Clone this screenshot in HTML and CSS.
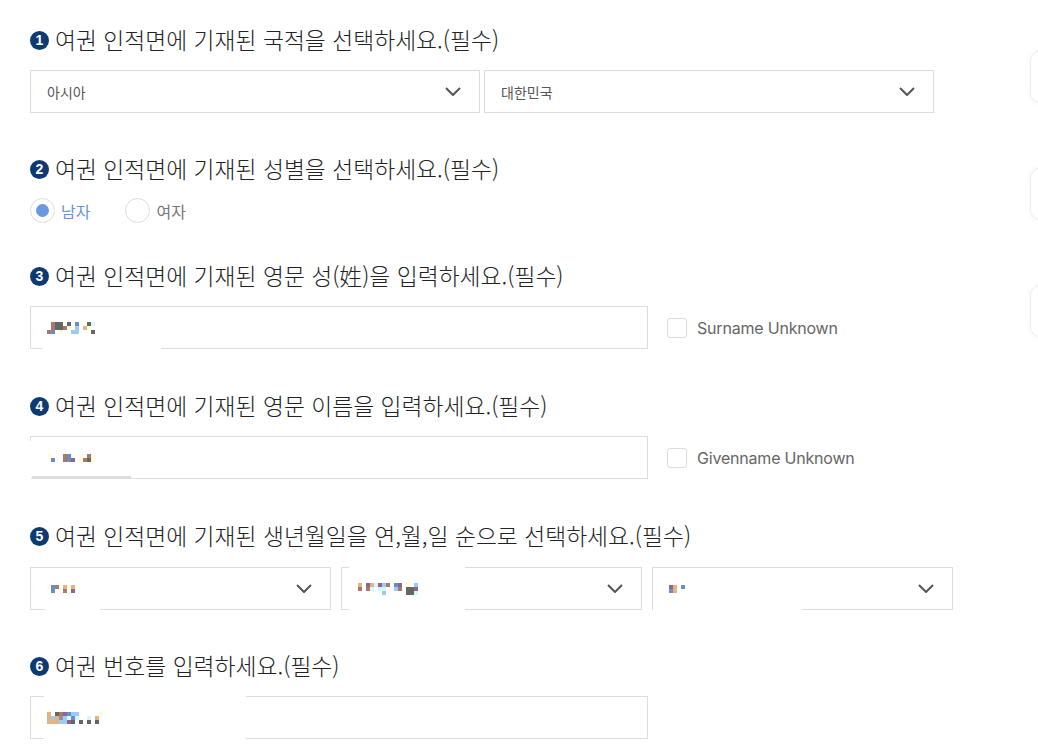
FILE: index.html
```html
<!DOCTYPE html>
<html lang="ko">
<head>
<meta charset="utf-8">
<title>여권 정보 입력</title>
<link rel="stylesheet" href="styles.css">
</head>
<body>
<div class="page">
  <form class="form">
    <section class="q q-first">
      <h2 class="q-title"><span class="num">1</span>여권 인적면에 기재된 국적을 선택하세요.(필수)</h2>
      <div class="row row-2">
        <div class="select"><span class="select-text">아시아</span><svg class="chev" viewBox="0 0 16 9"><path d="M1 1l7 7 7-7"/></svg></div>
        <div class="select"><span class="select-text">대한민국</span><svg class="chev" viewBox="0 0 16 9"><path d="M1 1l7 7 7-7"/></svg></div>
      </div>
    </section>

    <section class="q q-radio">
      <h2 class="q-title"><span class="num">2</span>여권 인적면에 기재된 성별을 선택하세요.(필수)</h2>
      <div class="radios">
        <label class="radio on"><span class="dot"></span>남자</label>
        <label class="radio"><span class="dot"></span>여자</label>
      </div>
    </section>

    <section class="q">
      <h2 class="q-title"><span class="num">3</span>여권 인적면에 기재된 영문 성(姓)을 입력하세요.(필수)</h2>
      <div class="row">
        <div class="input">
          <div class="mosaic">
            <div class="mr"><i class="e"></i><i class="b"></i><i class="g"></i><i class="g"></i><i class="e"></i><i class="g"></i><i class="e"></i><i class="u"></i><i class="e"></i><i class="e"></i><i class="g"></i><i class="c"></i></div>
            <div class="mr"><i class="e"></i><i class="b"></i><i class="g"></i><i class="g"></i><i class="b"></i><i class="e"></i><i class="y"></i><i class="l"></i><i class="e"></i><i class="t"></i><i class="y"></i><i class="e"></i></div>
            <div class="mr"><i class="b"></i><i class="u"></i><i class="e"></i><i class="y"></i><i class="e"></i><i class="e"></i><i class="l"></i><i class="l"></i><i class="e"></i><i class="e"></i><i class="e"></i><i class="g"></i></div>
          </div>
          <span class="gap gap-b" style="left:11px;width:119px"></span>
        </div>
        <label class="check"><span class="box"></span>Surname Unknown</label>
      </div>
    </section>

    <section class="q">
      <h2 class="q-title"><span class="num">4</span>여권 인적면에 기재된 영문 이름을 입력하세요.(필수)</h2>
      <div class="row">
        <div class="input">
          <div class="mosaic m2">
            <div class="mr"><i class="y"></i><i class="e"></i><i class="e"></i><i class="e"></i><i class="b"></i><i class="u"></i><i class="e"></i><i class="e"></i><i class="y"></i><i class="e"></i><i class="b"></i><i class="y"></i></div>
            <div class="mr"><i class="e"></i><i class="u"></i><i class="e"></i><i class="e"></i><i class="b"></i><i class="u"></i><i class="p"></i><i class="e"></i><i class="y"></i><i class="b"></i><i class="g"></i><i class="y"></i></div>
          </div>
          <span class="gap gap-l" style="top:4px;height:39px"></span>
          <span class="bar"></span>
        </div>
        <label class="check"><span class="box"></span>Givenname Unknown</label>
      </div>
    </section>

    <section class="q q-5">
      <h2 class="q-title"><span class="num">5</span>여권 인적면에 기재된 생년월일을 연,월,일 순으로 선택하세요.(필수)</h2>
      <div class="row row-3">
        <div class="select">
          <div class="mosaic m2">
            <div class="mr"><i class="y"></i><i class="u"></i><i class="b"></i><i class="e"></i><i class="t"></i><i class="y"></i><i class="t"></i></div>
            <div class="mr"><i class="e"></i><i class="u"></i><i class="e"></i><i class="e"></i><i class="b"></i><i class="e"></i><i class="p"></i></div>
          </div>
          <svg class="chev" viewBox="0 0 16 9"><path d="M1 1l7 7 7-7"/></svg>
          <span class="gap gap-b" style="left:14px;width:55px"></span>
        </div>
        <div class="select">
          <div class="mosaic m2">
            <div class="mr"><i class="t"></i><i class="e"></i><i class="p"></i><i class="t"></i><i class="c"></i><i class="p"></i><i class="l"></i><i class="b"></i><i class="e"></i><i class="u"></i><i class="p"></i><i class="e"></i><i class="y"></i><i class="e"></i><i class="l"></i></div>
            <div class="mr"><i class="b"></i><i class="e"></i><i class="b"></i><i class="c"></i><i class="e"></i><i class="c"></i><i class="c"></i><i class="e"></i><i class="e"></i><i class="l"></i><i class="b"></i><i class="e"></i><i class="g"></i><i class="g"></i><i class="p"></i></div>
            <div class="mr"><i class="e"></i><i class="e"></i><i class="e"></i><i class="e"></i><i class="e"></i><i class="e"></i><i class="l"></i><i class="e"></i><i class="e"></i><i class="e"></i><i class="e"></i><i class="e"></i><i class="g"></i><i class="g"></i><i class="c"></i></div>
          </div>
          <svg class="chev" viewBox="0 0 16 9"><path d="M1 1l7 7 7-7"/></svg>
          <span class="gap gap-t" style="left:7px;width:116px"></span>
          <span class="gap gap-b" style="left:7px;width:116px"></span>
        </div>
        <div class="select">
          <div class="mosaic m2">
            <div class="mr"><i class="p"></i><i class="t"></i><i class="e"></i><i class="u"></i></div>
            <div class="mr"><i class="u"></i><i class="t"></i><i class="e"></i><i class="e"></i></div>
          </div>
          <svg class="chev" viewBox="0 0 16 9"><path d="M1 1l7 7 7-7"/></svg>
          <span class="gap gap-b" style="left:0;width:149px"></span>
        </div>
      </div>
    </section>

    <section class="q">
      <h2 class="q-title"><span class="num">6</span>여권 번호를 입력하세요.(필수)</h2>
      <div class="row">
        <div class="input">
          <div class="mosaic">
            <div class="mr"><i class="t"></i><i class="e"></i><i class="g"></i><i class="b"></i><i class="p"></i><i class="u"></i><i class="l"></i><i class="l"></i><i class="e"></i><i class="e"></i><i class="e"></i><i class="e"></i><i class="e"></i><i class="y"></i></div>
            <div class="mr"><i class="t"></i><i class="l"></i><i class="t"></i><i class="k"></i><i class="l"></i><i class="c"></i><i class="u"></i><i class="c"></i><i class="e"></i><i class="e"></i><i class="c"></i><i class="e"></i><i class="t"></i><i class="e"></i></div>
            <div class="mr"><i class="t"></i><i class="t"></i><i class="t"></i><i class="l"></i><i class="l"></i><i class="p"></i><i class="g"></i><i class="e"></i><i class="g"></i><i class="e"></i><i class="g"></i><i class="e"></i><i class="g"></i><i class="e"></i></div>
          </div>
          <span class="gap gap-t" style="left:13px;width:202px"></span>
          <span class="gap gap-b" style="left:13px;width:202px"></span>
        </div>
      </div>
    </section>
  </form>

  <div class="side">
    <div class="side-card"></div>
    <div class="side-card"></div>
    <div class="side-card"></div>
  </div>
</div>
</body>
</html>
```

FILE: styles.css
```css
* { box-sizing: border-box; }

html, body {
  margin: 0;
  padding: 0;
  background: #fff;
}

body {
  font-family: "Noto Sans CJK KR", "Noto Sans", sans-serif;
  color: #222;
  overflow: hidden;
}

.page {
  position: relative;
  width: 1038px;
  height: 747px;
  overflow: hidden;
}

.form {
  padding: 26px 0 0 30px;
}

.q {
  margin-bottom: 43px;
}

.q-first {
  margin-bottom: 42px;
}

.q-radio {
  margin-bottom: 39px;
}

.q-5 {
  margin-bottom: 42px;
}

.q-title {
  display: flex;
  align-items: center;
  height: 28px;
  margin: 0 0 16px;
  font-size: 22.8px;
  font-weight: 300;
  line-height: 28px;
  color: #222;
  letter-spacing: 0;
  white-space: nowrap;
}

.q-radio .q-title {
  margin-bottom: 15px;
}

.q-5 .q-title {
  margin-bottom: 17px;
}

.num {
  flex: none;
  display: inline-flex;
  align-items: center;
  justify-content: center;
  width: 19px;
  height: 19px;
  margin-right: 6px;
  border-radius: 50%;
  background: #0e3a72;
  color: #fff;
  font-family: "Liberation Sans", sans-serif;
  font-weight: 700;
  font-size: 14px;
  letter-spacing: 0;
}

.row {
  display: flex;
  align-items: center;
}

.row-2 { gap: 4px; }
.row-2 .select { width: 450px; }

.row-3 { gap: 10px; }
.row-3 .select { width: 301px; }

.select,
.input {
  position: relative;
  display: flex;
  align-items: center;
  height: 43px;
  border: 1px solid #ddd;
  background: #fff;
}

.select {
  justify-content: space-between;
  padding: 0 18px 0 16px;
}

.select-text {
  font-size: 14px;
  color: #555;
}

.chev {
  width: 16px;
  height: 9px;
  fill: none;
  stroke: #555;
  stroke-width: 2;
}

.input {
  width: 618px;
  padding: 0 16px;
}

.check {
  display: flex;
  align-items: center;
  margin-left: 19px;
  font-family: "Inter", "Liberation Sans", sans-serif;
  font-size: 16px;
  color: #666;
  letter-spacing: -0.2px;
}

.box {
  width: 20px;
  height: 20px;
  margin-right: 10px;
  border: 1px solid #ddd;
  border-radius: 3px;
}

.radios {
  display: flex;
  align-items: center;
  height: 25px;
}

.radio {
  display: flex;
  align-items: center;
  margin-right: 35px;
  font-size: 16px;
  color: #777;
}

.radio .dot {
  position: relative;
  width: 25px;
  height: 25px;
  margin-right: 6px;
  border: 1px solid #ddd;
  border-radius: 50%;
}

.radio.on { color: #6b94d8; }

.radio.on .dot::after {
  content: "";
  position: absolute;
  left: 5px;
  top: 5px;
  width: 13px;
  height: 13px;
  border-radius: 50%;
  background: #6b98e0;
}

/* redacted value mosaics */
.mosaic {
  display: flex;
  flex-direction: column;
}

.mr { display: flex; }

.mr i {
  display: block;
  width: 4px;
  height: 4px;
}

.mr .e { background: transparent; }
.mr .b { background: #a87a68; }
.mr .g { background: #666; }
.mr .k { background: #9a8aa0; }
.mr .u { background: #6a8cc8; }
.mr .l { background: #9cccf4; }
.mr .t { background: #e2b482; }
.mr .y { background: #fffbdc; }
.mr .c { background: #d6f6fb; }
.mr .p { background: #8a6690; }

/* white redaction patches over borders */
.gap {
  position: absolute;
  background: #fff;
}

.gap-b { bottom: -1px; height: 1px; }
.gap-t { top: -1px; height: 1px; }
.gap-l { left: -1px; width: 1px; }

.bar {
  position: absolute;
  left: 1px;
  bottom: -1px;
  width: 99px;
  height: 3px;
  background: #ddd;
}

/* partially visible side buttons */
.side {
  position: absolute;
  left: 1030px;
  top: 51px;
  display: flex;
  flex-direction: column;
  gap: 65px;
}

.side-card {
  width: 60px;
  height: 52px;
  border: 1px solid #eee;
  border-radius: 10px;
  background: #fff;
  box-shadow: 0 0 6px rgba(0, 0, 0, 0.05);
}
```
